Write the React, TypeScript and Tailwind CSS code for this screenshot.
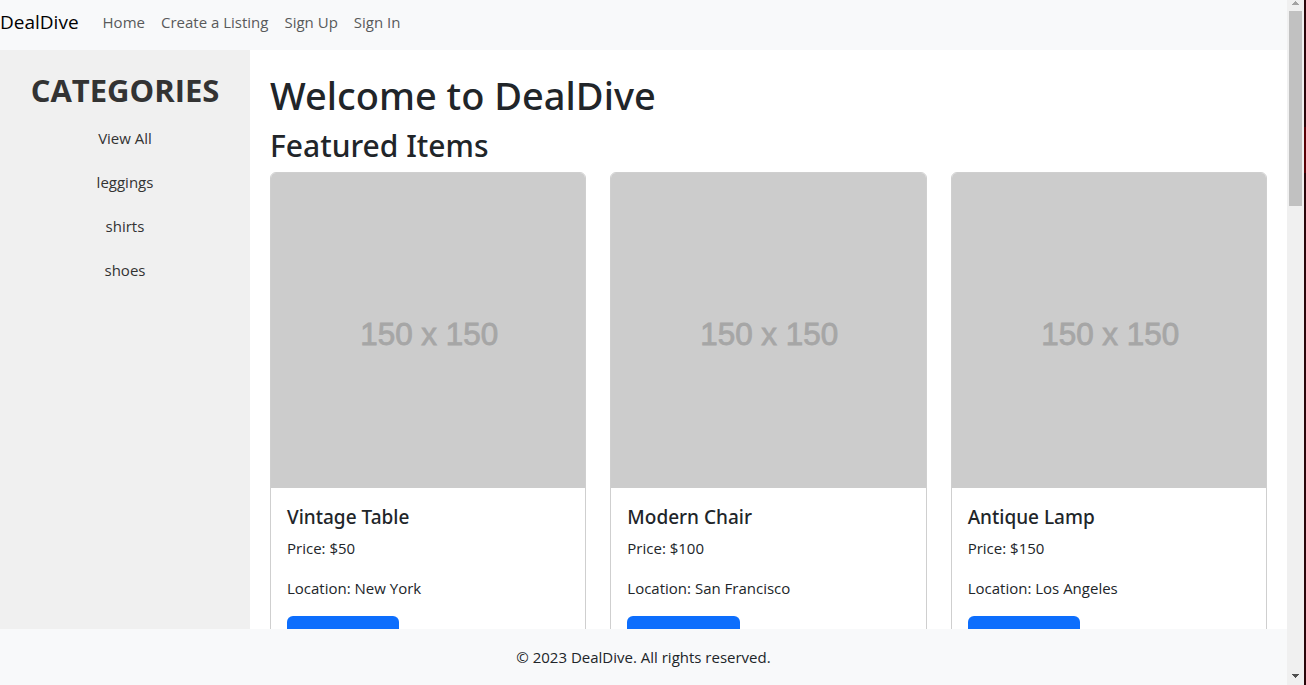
type Item = { name: string; price: number; location: string };

const navLinks = ['Home', 'Create a Listing', 'Sign Up', 'Sign In'];
const categories = ['View All', 'leggings', 'shirts', 'shoes'];
const items: Item[] = [
  { name: 'Vintage Table', price: 50, location: 'New York' },
  { name: 'Modern Chair', price: 100, location: 'San Francisco' },
  { name: 'Antique Lamp', price: 150, location: 'Los Angeles' },
];

function Navbar() {
  return (
    <nav className="flex h-[50px] shrink-0 items-center bg-[#f8f9fa] pb-1.5">
      <a href="#" className="mr-4 text-[19px] leading-[30px] text-black">DealDive</a>
      <ul className="flex text-[15px] leading-6 text-[#595a5a]">
        {navLinks.map((label) => (
          <li key={label}>
            <a href="#" className="block px-2">{label}</a>
          </li>
        ))}
      </ul>
    </nav>
  );
}

function Sidebar() {
  return (
    <aside className="w-[250px] shrink-0 bg-[#f0f0f0] p-5 text-center">
      <h2 className="mb-1.5 text-[31px] leading-10 font-bold text-[#333]">CATEGORIES</h2>
      <ul className="text-[15px] leading-6 text-[#333]">
        {categories.map((label) => (
          <li key={label}>
            <a href="#" className="block py-2.5">{label}</a>
          </li>
        ))}
      </ul>
    </aside>
  );
}

function Placeholder() {
  return (
    <svg viewBox="0 0 300 301" className="block w-full rounded-t-[5px] bg-[#ccc]" role="img" aria-label="150 x 150">
      <text
        x="151"
        y="164"
        textAnchor="middle"
        fontSize="30"
        fill="#a6a6a6"
        stroke="#a6a6a6"
        strokeWidth="0.8"
        fontFamily="'Liberation Sans', Arial, sans-serif"
      >
        150 x 150
      </text>
    </svg>
  );
}

function ItemCard({ item }: { item: Item }) {
  return (
    <article className="rounded-md border border-[#cfcfcf] bg-white">
      <Placeholder />
      <div className="p-4">
        <h3 className="mb-1.5 font-['Noto_Sans','Open_Sans',sans-serif] text-[19px] leading-[26px] font-medium">{item.name}</h3>
        <p className="mb-4">Price: ${item.price}</p>
        <p className="mb-4">Location: {item.location}</p>
        <button type="button" className="rounded-md bg-[#0d6efd] px-3.5 py-[7px] text-white">View Details</button>
      </div>
    </article>
  );
}

function ScrollTrack() {
  return (
    <div className="flex w-[17px] shrink-0 flex-col items-center bg-[#f0f0f0]" aria-hidden="true">
      <svg viewBox="0 0 17 11" className="block h-[11px] w-[17px] shrink-0" shapeRendering="crispEdges">
        <path d="M8 1h1v1h1v1h1v1h1v1H5V4h1V3h1V2h1z" fill="#a3a3a3" />
      </svg>
      <div className="h-[195px] w-[13px] bg-[#c1c1c1]" />
      <svg viewBox="0 0 17 17" className="mt-auto block h-[17px] w-[17px] shrink-0" shapeRendering="crispEdges">
        <path d="M5 6h7v1h-1v1h-1v1H9v1H8V9H7V8H6V7H5z" fill="#505050" />
      </svg>
    </div>
  );
}

export default function App() {
  return (
    <div className="flex h-screen overflow-hidden bg-white font-['Open_Sans','Noto_Sans',sans-serif] text-[15px] leading-6 text-[#212529]">
      <div className="flex min-w-0 flex-1 flex-col">
        <Navbar />
        <div className="flex min-h-0 flex-1 overflow-hidden">
          <Sidebar />
          <main className="min-w-0 flex-1 p-5">
            <h1 className="mb-1.5 font-['Noto_Sans','Open_Sans',sans-serif] text-[38px] leading-[50px] font-medium">Welcome to DealDive</h1>
            <h2 className="mb-1.5 font-['Noto_Sans','Open_Sans',sans-serif] text-[30px] leading-10 font-medium">Featured Items</h2>
            <div className="grid grid-cols-3 gap-6">
              {items.map((item) => (
                <ItemCard key={item.name} item={item} />
              ))}
            </div>
          </main>
        </div>
        <footer className="shrink-0 bg-[#f8f9fa] p-4 text-center">© 2023 DealDive. All rights reserved.</footer>
      </div>
      <ScrollTrack />
      <div className="flex w-0.5 shrink-0 flex-col bg-[#2a060a]">
        <div className="mt-[127px] h-[46px] bg-[#5a0006]" />
      </div>
    </div>
  );
}
